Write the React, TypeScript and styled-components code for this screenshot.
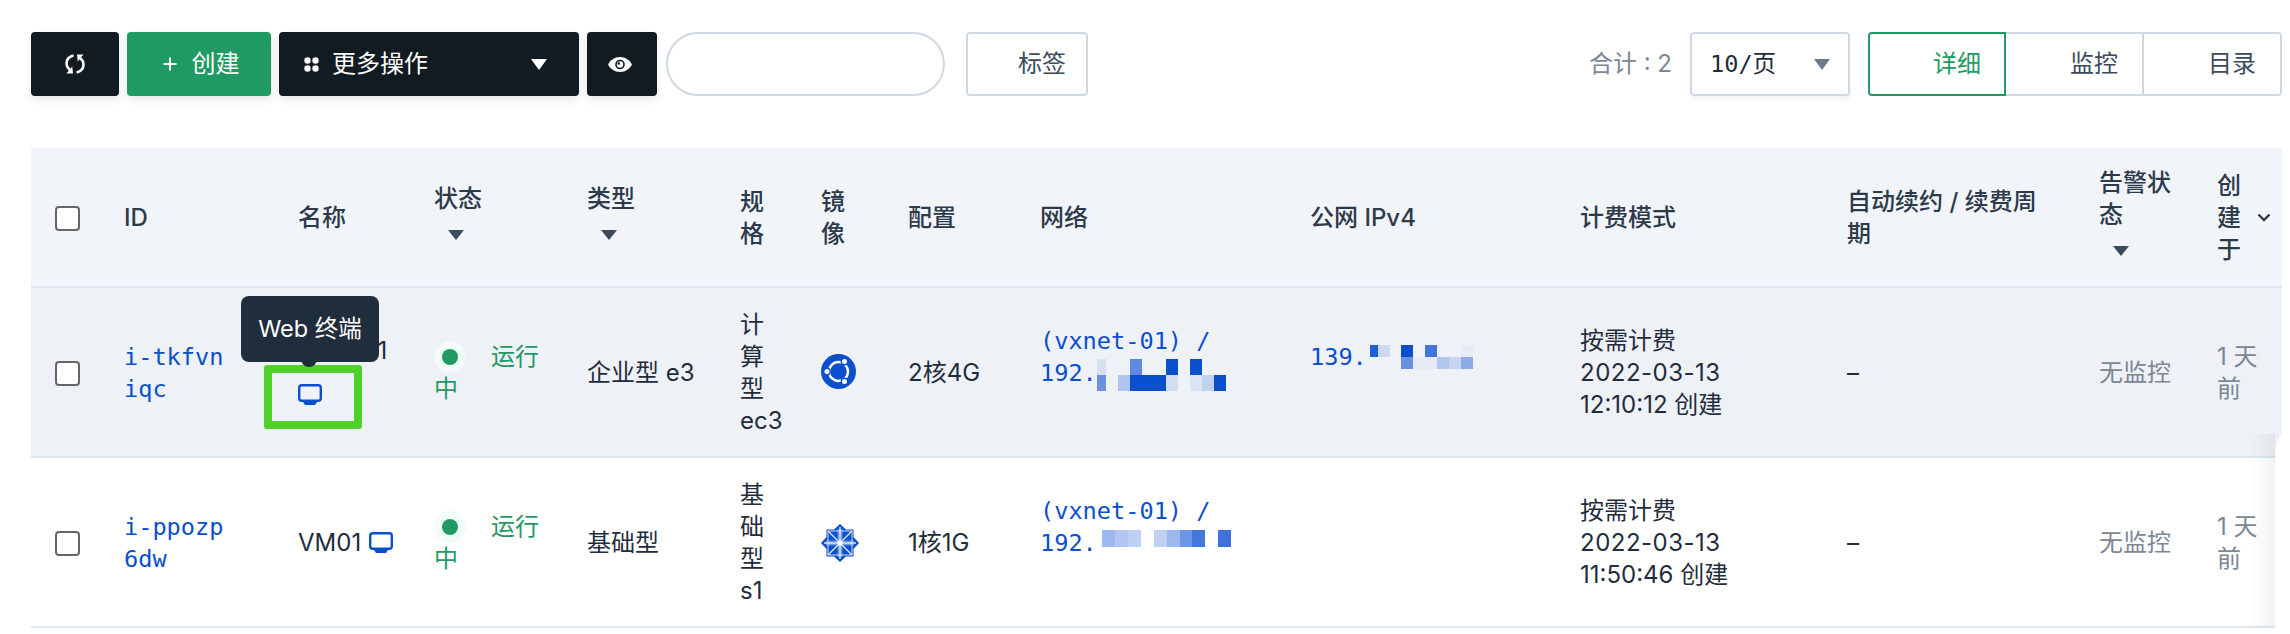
import React from 'react';
import styled, { createGlobalStyle } from 'styled-components';

const BLUE = '#0b4fcc';
const GREEN = '#1f9a63';
const DARK = '#121a22';

const GlobalStyle = createGlobalStyle`
  html, body {
    margin: 0;
    padding: 0;
    background: #fff;
  }

  body {
    font-family: Inter, "Noto Sans CJK SC", sans-serif;
    font-size: 24px;
    line-height: 32px;
    color: #1f2d3d;
  }
`;

const Page = styled.div`
  position: relative;
  width: 2290px;
  height: 634px;
  padding: 32px 8px 0 31px;
  box-sizing: border-box;
  overflow: hidden;
`;

const Toolbar = styled.div`
  display: flex;
  align-items: center;
  height: 64px;
  margin-bottom: 52px;
`;

const Button = styled.div<{ $w: number; $bg?: string }>`
  display: flex;
  align-items: center;
  justify-content: center;
  width: ${(p) => p.$w}px;
  height: 64px;
  margin-right: 8px;
  flex: none;
  box-sizing: border-box;
  border-radius: 4px;
  background: ${(p) => p.$bg || DARK};
  color: #fff;
  box-shadow: 0 4px 8px rgb(18 26 34 / 0.1);
`;

const CreateButton = styled(Button)`
  padding-left: 4px;
`;

const MoreButton = styled(Button)`
  justify-content: flex-start;
  padding: 0 32px 0 25px;
`;

const EyeButton = styled(Button)`
  padding-right: 5px;
`;

const Caret = styled.span<{ $color: string }>`
  display: block;
  width: 0;
  height: 0;
  border-left: 8px solid transparent;
  border-right: 8px solid transparent;
  border-top: 11px solid ${(p) => p.$color};
`;

const Spacer = styled.div`
  flex: 1;
`;

const SearchInput = styled.div`
  width: 279px;
  height: 64px;
  box-sizing: border-box;
  margin: 0 21px 0 1px;
  border: 2px solid #cfd9e6;
  border-radius: 32px;
`;

const LabelButton = styled.div`
  display: flex;
  align-items: center;
  justify-content: flex-end;
  width: 122px;
  height: 64px;
  box-sizing: border-box;
  padding-right: 20px;
  border: 2px solid #cfd9e6;
  border-radius: 4px;
  color: #3b4a5c;
`;

const Total = styled.div`
  margin-right: 18px;
  color: #7b8795;
`;

const PageSelect = styled.div`
  display: flex;
  align-items: center;
  justify-content: space-between;
  width: 160px;
  height: 64px;
  box-sizing: border-box;
  margin-right: 18px;
  padding: 0 18px 0 18px;
  border: 2px solid #cfd9e6;
  border-radius: 4px;
  font-family: "DejaVu Sans Mono", "Noto Sans CJK SC", monospace;
  font-size: 23.6px;
  box-shadow: 0 3px 5px rgb(18 26 34 / 0.06);
`;

const Segments = styled.div`
  display: flex;
  width: 414px;
  height: 64px;
`;

const Segment = styled.div<{ $active?: boolean }>`
  display: flex;
  align-items: center;
  justify-content: flex-end;
  width: 139px;
  box-sizing: border-box;
  padding-right: ${(p) => (p.$active ? 23 : 24)}px;
  color: ${(p) => (p.$active ? GREEN : '#3b4a5c')};
  border: 2px solid ${(p) => (p.$active ? GREEN : '#cfd9e6')};
  border-left-width: ${(p) => (p.$active ? 2 : 0)}px;
  border-radius: ${(p) => (p.$active ? '4px 0 0 4px' : '0')};

  &:last-child {
    border-radius: 0 4px 4px 0;
  }
`;

const Table = styled.table`
  width: 2251px;
  table-layout: fixed;
  border-collapse: collapse;
`;

const HeadRow = styled.tr`
  height: 139px;
  background: #f1f4f9;
  border-bottom: 2px solid #dfe6ee;
`;

const Row = styled.tr<{ $hover?: boolean }>`
  height: 170px;
  background: ${(p) => (p.$hover ? '#eef1f6' : '#fff')};
  border-bottom: 2px solid #dfe6ee;
`;

const Th = styled.th<{ $narrow?: number }>`
  padding: 2px ${(p) => p.$narrow || 0}px 0 0;
  font-weight: 500;
  text-align: left;
  color: #2c3a4b;
`;

const Td = styled.td<{ $narrow?: number }>`
  padding: 2px ${(p) => p.$narrow || 0}px 0 0;
`;

const Checkbox = styled.span`
  display: block;
  width: 25px;
  height: 25px;
  margin-left: 24px;
  box-sizing: border-box;
  border: 2px solid #666;
  border-radius: 4px;
  background: #fff;
`;

const SortMark = styled.span`
  display: block;
  width: 0;
  height: 0;
  margin: 15px 0 13px 14px;
  border-left: 8px solid transparent;
  border-right: 8px solid transparent;
  border-top: 10px solid #3b4a5c;
`;

const HeadWithChevron = styled.div`
  position: relative;
  width: 34px;
`;

const Chevron = styled.svg`
  position: absolute;
  top: 43px;
  left: 40px;
`;

const IdLink = styled.span`
  font-family: "DejaVu Sans Mono", monospace;
  font-size: 23.6px;
  color: ${BLUE};
  word-break: break-all;
`;

const MonoBlue = styled.div<{ $lines: number }>`
  min-height: ${(p) => p.$lines * 32}px;
  font-family: "DejaVu Sans Mono", monospace;
  font-size: 23.6px;
  color: ${BLUE};
  white-space: nowrap;
`;

const NameWrap = styled.div`
  white-space: nowrap;
`;

const IconSlot = styled.div`
  position: relative;
  height: 27px;
  padding-top: 17px;
`;

const Highlight = styled.div`
  position: absolute;
  top: -2px;
  left: -34px;
  width: 98px;
  height: 64px;
  box-sizing: border-box;
  border: 8px solid #4fd02a;
  border-radius: 3px;
`;

const Tooltip = styled.div`
  position: absolute;
  top: -71px;
  left: -57px;
  display: flex;
  align-items: center;
  justify-content: center;
  width: 138px;
  height: 66px;
  border-radius: 8px;
  background: #1f2d3d;
  color: #fff;
  font-size: 23.5px;

  &::after {
    content: '';
    position: absolute;
    left: 60px;
    bottom: -5px;
    width: 16px;
    height: 8px;
    border-radius: 0 0 8px 8px;
    background: #1f2d3d;
  }
`;

const StatusDot = styled.span`
  display: inline-block;
  position: relative;
  width: 32px;
  height: 32px;
  margin-right: 25px;
  border-radius: 50%;
  background: #f1fbf8;
  vertical-align: top;

  &::after {
    content: '';
    position: absolute;
    top: 8px;
    left: 8px;
    width: 16px;
    height: 16px;
    border-radius: 50%;
    background: ${GREEN};
  }
`;

const Status = styled.div`
  color: ${GREEN};
`;

const Muted = styled.div`
  color: #7b8795;
`;

const DateText = styled.span`
  letter-spacing: 0.5px;
`;

const MosaicBox = styled.span<{ $top: number; $left: number }>`
  display: inline-flex;
  flex-direction: column;
  height: 0;
  margin: ${(p) => p.$top}px 0 0 ${(p) => p.$left}px;
  vertical-align: top;
`;

const MosaicRow = styled.span`
  display: flex;
`;

const Pixel = styled.span<{ $w: number; $h: number; $c: string }>`
  display: block;
  width: ${(p) => p.$w}px;
  height: ${(p) => p.$h}px;
  flex: none;
  background: ${(p) => p.$c};
`;

const ScrollEdge = styled.div`
  position: absolute;
  top: 428px;
  bottom: 0;
  left: 2275px;
  width: 15px;
  background: #fff;
  border-top-left-radius: 15px 32px;

  &::before {
    content: '';
    position: absolute;
    top: 6px;
    bottom: 7px;
    right: 100%;
    width: 24px;
    background: linear-gradient(to right, rgb(30 40 60 / 0), rgb(30 40 60 / 0.06));
  }
`;

const InlineScreen = styled.span`
  display: inline-block;
  margin-left: 8px;
  vertical-align: -3px;
`;

const Mosaic = ({
  rows,
  widths,
  h,
  top,
  left = 0,
}: {
  rows: string[][];
  widths: number[];
  h: number;
  top: number;
  left?: number;
}) => (
  <MosaicBox $top={top} $left={left}>
    {rows.map((row, i) => (
      <MosaicRow key={i}>
        {row.map((c, j) => (
          <Pixel key={j} $w={widths[j]} $h={h} $c={c || 'transparent'} />
        ))}
      </MosaicRow>
    ))}
  </MosaicBox>
);

const RefreshIcon = () => (
  <svg width="20" height="20" viewBox="0 0 20 20" fill="none">
    <path d="M7.500 1.800C3.800 3 1.500 6 1.500 9.500c0 2.300 1 4.300 2.600 5.700" stroke="#fff" strokeWidth="2.600" strokeLinecap="round" />
    <path d="M12.500 18.200c3.700-1.200 6-4.200 6-7.700 0-2.300-1-4.300-2.600-5.700" stroke="#fff" strokeWidth="2.600" strokeLinecap="round" />
    <path d="M1.500 19.500 8 19.500 7.200 12.500Z" fill="#fff" />
    <path d="M18.500 .5 12 .5 12.800 7.500Z" fill="#fff" />
  </svg>
);

const PlusIcon = () => (
  <svg width="14" height="14" viewBox="0 0 14 14" style={{ marginRight: 15 }}>
    <path d="M7 .5v13M.5 7h13" stroke="#fff" strokeWidth="2" />
  </svg>
);

const GridIcon = () => (
  <svg width="15" height="15" viewBox="0 0 15 15" style={{ marginRight: 13 }}>
    <circle cx="3.500" cy="3.500" r="3.200" fill="#fff" />
    <circle cx="11.500" cy="3.500" r="3.200" fill="#fff" />
    <circle cx="3.500" cy="11.500" r="3.200" fill="#fff" />
    <circle cx="11.500" cy="11.500" r="3.200" fill="#fff" />
  </svg>
);

const EyeIcon = () => (
  <svg width="24" height="15" viewBox="0 0 24 15">
    <path d="M12 0C6.500 0 2.200 3.200 0 7.500 2.200 11.800 6.500 15 12 15s9.800-3.200 12-7.500C21.800 3.200 17.500 0 12 0Z" fill="#fff" />
    <circle cx="12" cy="7.500" r="4.800" fill={DARK} />
    <circle cx="12" cy="7.500" r="3.200" fill="#fff" />
    <circle cx="10.800" cy="6.500" r="1.300" fill={DARK} />
  </svg>
);

const ScreenIcon = () => (
  <svg width="24" height="22" viewBox="0 0 24 22" style={{ display: 'block' }}>
    <rect x="1.200" y="1.200" width="21.600" height="15.600" rx="2.500" fill="none" stroke={BLUE} strokeWidth="2.400" />
    <path d="M5 18h14l-2 3H7Z" fill={BLUE} />
  </svg>
);

const UbuntuIcon = () => (
  <svg width="35" height="35" viewBox="0 0 35 35" style={{ display: 'block', marginTop: -3 }}>
    <circle cx="17.500" cy="17.500" r="17.500" fill={BLUE} />
    <circle cx="17.500" cy="17.500" r="9.500" fill="none" stroke="#fff" strokeWidth="2.400" />
    <circle cx="23.500" cy="7.500" r="3.200" fill="#fff" stroke={BLUE} strokeWidth="1.400" />
    <circle cx="6" cy="17.500" r="3.200" fill="#fff" stroke={BLUE} strokeWidth="1.400" />
    <circle cx="23.500" cy="27.500" r="3.200" fill="#fff" stroke={BLUE} strokeWidth="1.400" />
  </svg>
);

const CentosIcon = () => (
  <svg width="38" height="38" viewBox="0 0 38 38" style={{ display: 'block' }}>
    <path d="M19 0l6 5.500h7.500V13l5.500 6-5.500 6v7.500H25L19 38l-6-5.500H5.500V25L0 19l5.500-6V5.500H13Z" fill={BLUE} />
    <path d="M16.500 5h5v28h-5zM5 16.500h28v5H5z" fill="#8fb0ea" opacity="0.7" />
    <path d="M19 3v32M3 19h32M7 7l24 24M31 7 7 31" stroke="#dce6f8" strokeWidth="1.400" />
    <rect x="7" y="7" width="24" height="24" fill="none" stroke="#cfdcf6" strokeWidth="1" />
    <circle cx="19" cy="19" r="2.600" fill="#fff" />
  </svg>
);

const A = BLUE;
const mosaicA = [
  ['#d6e0f0', '', '', '#5f8ae0', '', '', A, '', A, '', ''],
  ['#6a90e0', '', '#aec5ec', A, A, A, '#d3ddf2', '', '#dce3f4', '#c0d2f0', A],
];
const mosaicB = [
  ['#1f5fd6', '#cdd9f3', '', A, '', '#4177dd', '', '', '#e6ebf6'],
  ['', '', '', '#6a90e0', '#e6ebf6', '#e6ebf6', '#b0c6ec', '#c6d4f1', '#8dabe8'],
];
const mosaicC = [['#9db8ee', '#b2c6f0', '#bed0f3', '', '#bfd2f3', '#9db8ee', '#6d94e6', '#4476dc', '', '#3f72db']];

const COLS = [93, 174, 136, 153, 153, 81, 87, 132, 270, 270, 267, 252, 118, 65];

const Billing = ({ time }: { time: string }) => (
  <div>
    按需计费
    <br />
    <DateText>2022-03-13</DateText>
    <br />
    {time} 创建
  </div>
);

export default function App() {
  return (
    <Page>
      <GlobalStyle />
      <Toolbar>
        <Button $w={88}>
          <RefreshIcon />
        </Button>
        <CreateButton $w={144} $bg={GREEN}>
          <PlusIcon />
          创建
        </CreateButton>
        <MoreButton $w={300}>
          <GridIcon />
          更多操作
          <Spacer />
          <Caret $color="#fff" />
        </MoreButton>
        <EyeButton $w={70}>
          <EyeIcon />
        </EyeButton>
        <SearchInput />
        <LabelButton>标签</LabelButton>
        <Spacer />
        <Total>合计 : 2</Total>
        <PageSelect>
          10/页
          <Caret $color="#6b7a8a" />
        </PageSelect>
        <Segments>
          <Segment $active>详细</Segment>
          <Segment>监控</Segment>
          <Segment>目录</Segment>
        </Segments>
      </Toolbar>

      <Table>
        <colgroup>
          {COLS.map((w, i) => (
            <col key={i} style={{ width: w }} />
          ))}
        </colgroup>
        <thead>
          <HeadRow>
            <Th>
              <Checkbox />
            </Th>
            <Th>ID</Th>
            <Th>名称</Th>
            <Th>
              状态
              <SortMark />
            </Th>
            <Th>
              类型
              <SortMark />
            </Th>
            <Th $narrow={47}>规格</Th>
            <Th $narrow={53}>镜像</Th>
            <Th>配置</Th>
            <Th>网络</Th>
            <Th>公网 IPv4</Th>
            <Th>计费模式</Th>
            <Th $narrow={50}>自动续约 / 续费周期</Th>
            <Th $narrow={44}>
              告警状态
              <SortMark />
            </Th>
            <Th>
              <HeadWithChevron>
                创建于
                <Chevron width="14" height="9" viewBox="0 0 14 9" fill="none">
                  <path d="M1.500 1.500 7 7l5.500-5.500" stroke="#2c3a4b" strokeWidth="2.400" />
                </Chevron>
              </HeadWithChevron>
            </Th>
          </HeadRow>
        </thead>
        <tbody>
          <Row $hover>
            <Td>
              <Checkbox />
            </Td>
            <Td $narrow={66}>
              <IdLink>i-tkfvniqc</IdLink>
            </Td>
            <Td>
              <NameWrap>VM-001</NameWrap>
              <IconSlot>
                <ScreenIcon />
                <Highlight />
                <Tooltip>Web 终端</Tooltip>
              </IconSlot>
            </Td>
            <Td $narrow={40}>
              <Status>
                <StatusDot />
                运行中
              </Status>
            </Td>
            <Td>企业型 e3</Td>
            <Td $narrow={47}>计算型 ec3</Td>
            <Td>
              <UbuntuIcon />
            </Td>
            <Td>2核4G</Td>
            <Td>
              <MonoBlue $lines={3}>
                (vxnet-01) /
                <br />
                192.
                <Mosaic rows={mosaicA} widths={[9, 12, 12, 12, 12, 12, 12, 12, 12, 12, 12]} h={16} top={2} />
              </MonoBlue>
            </Td>
            <Td>
              <MonoBlue $lines={2}>
                139.
                <Mosaic rows={mosaicB} widths={[8, 12, 11, 12, 12, 12, 12, 12, 12]} h={12} top={4} left={3} />
              </MonoBlue>
            </Td>
            <Td>
              <Billing time="12:10:12" />
            </Td>
            <Td>–</Td>
            <Td>
              <Muted>无监控</Muted>
            </Td>
            <Td $narrow={15}>
              <Muted>1 天前</Muted>
            </Td>
          </Row>
          <Row>
            <Td>
              <Checkbox />
            </Td>
            <Td $narrow={66}>
              <IdLink>i-ppozp6dw</IdLink>
            </Td>
            <Td>
              <NameWrap>
                VM01
                <InlineScreen>
                  <ScreenIcon />
                </InlineScreen>
              </NameWrap>
            </Td>
            <Td $narrow={40}>
              <Status>
                <StatusDot />
                运行中
              </Status>
            </Td>
            <Td>基础型</Td>
            <Td $narrow={47}>基础型 s1</Td>
            <Td>
              <CentosIcon />
            </Td>
            <Td>1核1G</Td>
            <Td>
              <MonoBlue $lines={3}>
                (vxnet-01) /
                <br />
                192.
                <Mosaic rows={mosaicC} widths={[13, 13, 13, 13, 13, 13, 12, 13, 13, 13]} h={17} top={3} left={5} />
              </MonoBlue>
            </Td>
            <Td />
            <Td>
              <Billing time="11:50:46" />
            </Td>
            <Td>–</Td>
            <Td>
              <Muted>无监控</Muted>
            </Td>
            <Td $narrow={15}>
              <Muted>1 天前</Muted>
            </Td>
          </Row>
        </tbody>
      </Table>
      <ScrollEdge />
    </Page>
  );
}
